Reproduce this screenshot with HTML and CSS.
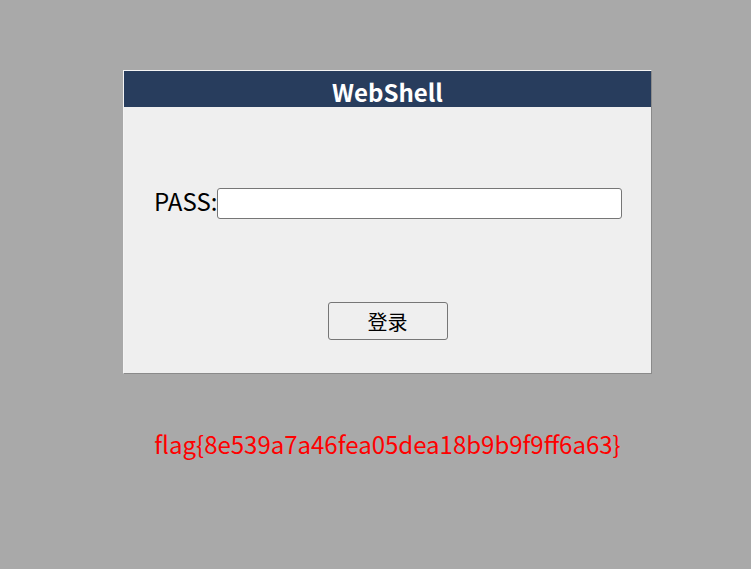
FILE: index.html
```html
<!DOCTYPE html>
<html lang="zh-CN">
<head>
    <meta charset="UTF-8">
    <title>WebShell</title>
    <link rel="stylesheet" href="styles.css">
</head>
<body>
    <div class="wrap">
        <div class="panel">
            <div class="title">WebShell</div>
            <form class="form" onsubmit="return false;">
                <div class="row">
                    <label for="pass">PASS:</label>
                    <input type="password" id="pass" name="pass">
                </div>
                <div class="actions">
                    <button type="submit" class="button">登录</button>
                </div>
            </form>
        </div>
        <div class="flag">flag{8e539a7a46fea05dea18b9b9f9ff6a63}</div>
    </div>
</body>
</html>
```

FILE: styles.css
```css
body {
    margin: 0;
    background-color: #a9a9a9;
    font-family: "Noto Sans CJK SC", "Noto Sans", sans-serif;
}
.wrap {
    width: 529px;
    margin-left: 123px;
    padding-top: 70px;
}
.panel {
    background-color: #efefef;
    border: 1px solid;
    border-color: #f4f4f4 #8a8a8a #8a8a8a #f4f4f4;
}
.title {
    height: 33px;
    padding-top: 3px;
    line-height: 36px;
    background-color: #283d5d;
    color: #fff;
    font-size: 24px;
    font-weight: bold;
    text-align: center;
}
.form {
    margin: 0;
    padding: 81px 29px 33px 30px;
}
.row {
    display: flex;
    align-items: center;
}
label {
    font-size: 24px;
    color: #000;
    line-height: 31px;
    margin-top: -6px;
}
input {
    flex: 1;
    height: 31px;
    box-sizing: border-box;
    border: 1px solid #767676;
    border-radius: 3px;
    background: #fff;
}
.actions {
    display: flex;
    justify-content: center;
    margin-top: 83px;
    padding-right: 1px;
}
.button {
    width: 120px;
    height: 38px;
    font-family: "Noto Sans CJK SC", sans-serif;
    font-size: 20px;
    color: #000;
    background-color: #efefef;
    border: 1px solid #767676;
    border-radius: 3px;
}
.flag {
    margin-top: 52px;
    text-align: center;
    color: #ff0000;
    font-size: 24px;
}
```
